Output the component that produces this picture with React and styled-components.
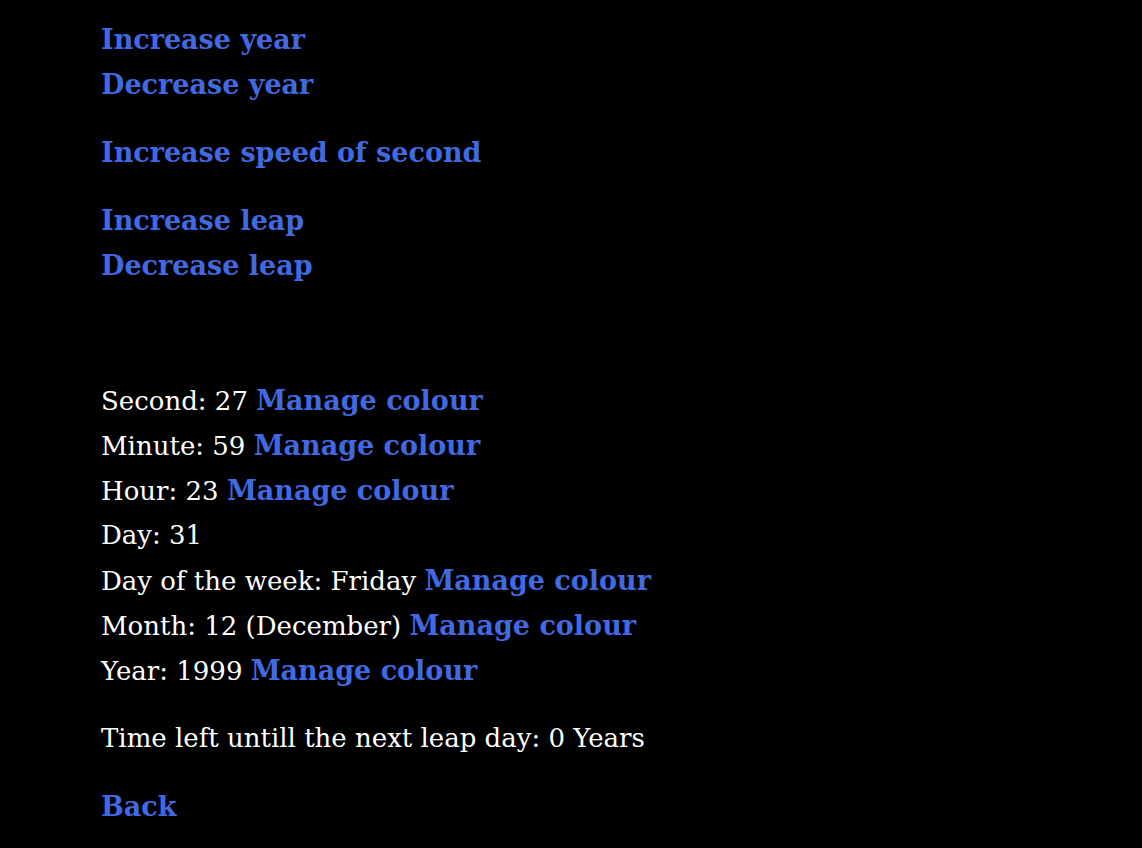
import React from 'react'
import { createGlobalStyle, styled } from 'styled-components'

const GlobalStyle = createGlobalStyle`
    html, body {
        margin: 0;
        padding: 0;
        background: #000;
    }
    body {
        font-family: "DejaVu Serif", "Liberation Serif", serif;
        color: #fff;
    }
`

const Page = styled.main`
    min-height: 100vh;
    padding: 17px 0 0 101px;
    box-sizing: border-box;
    font-size: 26px;
    line-height: 45px;
`

const Group = styled.section`
    display: flex;
    flex-direction: column;
    align-items: flex-start;
    margin-bottom: ${(p) => p.$gap || 23}px;
`

const Link = styled.a`
    color: #4169e1;
    font-size: 27px;
    font-weight: 700;
    text-decoration: none;
    cursor: pointer;
`

const Line = styled.div`
    height: 45px;
    white-space: nowrap;
`

const stats = [
    { label: 'Second', value: '27', colour: true },
    { label: 'Minute', value: '59', colour: true },
    { label: 'Hour', value: '23', colour: true },
    { label: 'Day', value: '31', colour: false },
    { label: 'Day of the week', value: 'Friday', colour: true },
    { label: 'Month', value: '12 (December)', colour: true },
    { label: 'Year', value: '1999', colour: true },
]

function App() {
    return (
        <>
            <GlobalStyle />
            <Page>
                <Group>
                    <Link>Increase year</Link>
                    <Link>Decrease year</Link>
                </Group>
                <Group>
                    <Link>Increase speed of second</Link>
                </Group>
                <Group $gap={90}>
                    <Link>Increase leap</Link>
                    <Link>Decrease leap</Link>
                </Group>
                <Group>
                    {stats.map((item) => (
                        <Line key={item.label}>
                            {item.label}: {item.value}
                            {item.colour && <> <Link>Manage colour</Link></>}
                        </Line>
                    ))}
                </Group>
                <Group>
                    <Line>Time left untill the next leap day: 0 Years</Line>
                </Group>
                <Group>
                    <Link>Back</Link>
                </Group>
            </Page>
        </>
    )
}

export default App
